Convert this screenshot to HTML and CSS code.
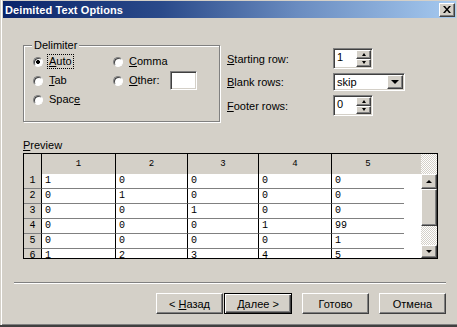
FILE: index.html
```html
<!DOCTYPE html>
<html>
<head>
<meta charset="utf-8">
<title>Delimited Text Options</title>
<link rel="stylesheet" href="styles.css">
</head>
<body>
<div class="window">
  <div class="titlebar">
    <span class="title">Deimited Text Options</span>
    <span class="close"><svg width="8" height="7" viewBox="0 0 8 7"><path d="M0 0h2l2 2.4L6 0h2L5 3.5 8 7H6L4 4.6 2 7H0l3-3.5z" fill="#000"/></svg></span>
  </div>

  <div class="top">
    <div class="group">
      <span class="legend">Delimiter</span>
      <div class="radios">
        <div class="radio"><span class="dot on"></span><span class="focus"><u>A</u>uto</span></div>
        <div class="radio"><span class="dot"></span><span><u>C</u>omma</span></div>
        <div class="radio"><span class="dot"></span><span><u>T</u>ab</span></div>
        <div class="radio"><span class="dot"></span><span><u>O</u>ther:</span><span class="textbox"></span></div>
        <div class="radio"><span class="dot"></span><span>Spac<u>e</u></span></div>
      </div>
    </div>

    <div class="fields">
      <div class="field">
        <span class="flabel"><u>S</u>tarting row:</span>
        <span class="spin"><span class="val">1</span><span class="spinbtns"><span class="sb"><span class="up"></span></span><span class="sb"><span class="down"></span></span></span></span>
      </div>
      <div class="field">
        <span class="flabel"><u>B</u>lank rows:</span>
        <span class="combo"><span class="val">skip</span><span class="dropbtn"><span class="down big"></span></span></span>
      </div>
      <div class="field">
        <span class="flabel"><u>F</u>ooter rows:</span>
        <span class="spin"><span class="val">0</span><span class="spinbtns"><span class="sb"><span class="up"></span></span><span class="sb"><span class="down"></span></span></span></span>
      </div>
    </div>
  </div>

  <div class="preview-label"><u>P</u>review</div>

  <div class="table">
    <div class="sheet">
      <div class="row head"><span class="c rh"></span><span class="c w1">1</span><span class="c w2">2</span><span class="c w3">3</span><span class="c w4">4</span><span class="c w5">5</span><span class="c fill"></span></div>
      <div class="row"><span class="c rh">1</span><span class="c w1">1</span><span class="c w2">0</span><span class="c w3">0</span><span class="c w4">0</span><span class="c w5">0</span><span class="c fill"></span></div>
      <div class="row"><span class="c rh">2</span><span class="c w1">0</span><span class="c w2">1</span><span class="c w3">0</span><span class="c w4">0</span><span class="c w5">0</span><span class="c fill"></span></div>
      <div class="row"><span class="c rh">3</span><span class="c w1">0</span><span class="c w2">0</span><span class="c w3">1</span><span class="c w4">0</span><span class="c w5">0</span><span class="c fill"></span></div>
      <div class="row"><span class="c rh">4</span><span class="c w1">0</span><span class="c w2">0</span><span class="c w3">0</span><span class="c w4">1</span><span class="c w5">99</span><span class="c fill"></span></div>
      <div class="row"><span class="c rh">5</span><span class="c w1">0</span><span class="c w2">0</span><span class="c w3">0</span><span class="c w4">0</span><span class="c w5">1</span><span class="c fill"></span></div>
      <div class="row"><span class="c rh">6</span><span class="c w1">1</span><span class="c w2">2</span><span class="c w3">3</span><span class="c w4">4</span><span class="c w5">5</span><span class="c fill"></span></div>
    </div>
    <div class="vscroll">
      <div class="corner"></div>
      <div class="sbtn up-btn"><span class="up"></span></div>
      <div class="thumb"></div>
      <div class="track"></div>
      <div class="sbtn down-btn"><span class="down"></span></div>
    </div>
  </div>

  <div class="sep"></div>

  <div class="buttons">
    <span class="btn"><span>&lt; <u>Н</u>азад</span></span>
    <span class="btn default"><span><u>Д</u>алее &gt;</span></span>
    <span class="btn gap"><span>Готово</span></span>
    <span class="btn gap"><span>Отмена</span></span>
  </div>
</div>
</body>
</html>
```

FILE: styles.css
```css
html, body {
  margin: 0;
  padding: 0;
  background: #d4d0c8;
  overflow: hidden;
}

.window {
  width: 457px;
  height: 327px;
  box-sizing: border-box;
  padding: 1px 1px 0 3px;
  background: #d4d0c8;
  border-bottom: 2px solid #404040;
  box-shadow: inset 1px 0 0 #d4d0c8, inset 2px 0 0 #ffffff, inset 0 -1px 0 #808080;
  font-family: "Liberation Sans", Arial, sans-serif;
  font-size: 11px;
  color: #000;
  display: flex;
  flex-direction: column;
}

u { text-decoration: underline; text-underline-offset: 1px; }

/* title bar */
.titlebar {
  height: 17px;
  display: flex;
  align-items: center;
  justify-content: space-between;
  padding: 0 1px 0 2px;
  background: linear-gradient(to right, #0a246a 0%, #2a4a8a 35%, #6a8cc0 65%, #a6caf0 100%);
}
.title {
  color: #fff;
  font-weight: bold;
  font-size: 11px;
  letter-spacing: 0.1px;
}
.close {
  width: 16px;
  height: 14px;
  box-sizing: border-box;
  background: #d4d0c8;
  border: 1px solid;
  border-color: #fff #404040 #404040 #fff;
  box-shadow: inset -1px -1px 0 #808080;
  display: flex;
  align-items: center;
  justify-content: center;
}

/* top section */
.top {
  display: flex;
  margin-top: 27px;
  margin-left: 20px;
}
.group {
  position: relative;
  width: 197px;
  height: 77px;
  box-sizing: border-box;
  border: 1px solid #808080;
  box-shadow: 1px 1px 0 #fff, inset 1px 1px 0 #fff;
}
.legend {
  position: absolute;
  top: -7px;
  left: 8px;
  padding: 0 2px;
  line-height: 13px;
  background: #d4d0c8;
}
.radios {
  display: grid;
  grid-template-columns: 80px 1fr;
  grid-auto-rows: 13px;
  row-gap: 6px;
  padding: 9px 0 0 9px;
}
.radio {
  display: flex;
  align-items: center;
  gap: 6px;
  line-height: 13px;
}
.dot {
  width: 10px;
  height: 10px;
  box-sizing: border-box;
  border-radius: 50%;
  background: #fff;
  border: 1px solid;
  border-color: #808080 #ffffff #ffffff #808080;
  box-shadow: inset 1px 1px 0 #404040;
  flex: none;
}
.dot.on {
  background: radial-gradient(circle, #000 0 1.8px, #fff 2.2px);
}
.focus {
  outline: 1px dotted #000;
  padding: 0 1px;
  margin-left: -1px;
}
.textbox {
  width: 27px;
  height: 19px;
  box-sizing: border-box;
  margin-left: 4px;
  background: #fff;
  border: 1px solid;
  border-color: #808080 #fff #fff #808080;
  box-shadow: inset 1px 1px 0 #404040, inset -1px -1px 0 #d4d0c8;
  flex: none;
}

.fields {
  display: flex;
  flex-direction: column;
  gap: 4px;
  margin: 3px 0 0 7px;
}
.field {
  display: flex;
  align-items: center;
}
.flabel {
  width: 106px;
}
.spin, .combo {
  display: flex;
  box-sizing: border-box;
  background: #fff;
  border: 1px solid;
  border-color: #808080 #fff #fff #808080;
  box-shadow: inset 1px 1px 0 #404040, inset -1px -1px 0 #d4d0c8;
  padding: 1px;
}
.spin { width: 40px; height: 21px; }
.combo { width: 72px; height: 18px; }
.val {
  flex: 1;
  padding-left: 2px;
  line-height: 15px;
  font-size: 11px;
}
.combo .val { line-height: 14px; }
.spinbtns {
  width: 15px;
  display: flex;
  flex-direction: column;
}
.sb, .dropbtn, .sbtn {
  box-sizing: border-box;
  background: #d4d0c8;
  border: 1px solid;
  border-color: #fff #404040 #404040 #fff;
  box-shadow: inset -1px -1px 0 #808080;
  display: flex;
  align-items: center;
  justify-content: center;
}
.sb { flex: 1; }
.dropbtn { width: 16px; }
.up, .down {
  width: 0;
  height: 0;
  border-left: 2.5px solid transparent;
  border-right: 2.5px solid transparent;
}
.up { border-bottom: 3px solid #000; }
.down { border-top: 3px solid #000; }
.down.big {
  border-left-width: 4px;
  border-right-width: 4px;
  border-top-width: 4px;
}

/* preview */
.preview-label {
  margin: 17px 0 0 20px;
  line-height: 13px;
}
.table {
  display: flex;
  width: 415px;
  height: 106px;
  box-sizing: border-box;
  margin: 1px 0 0 20px;
  border: 1px solid #000;
  overflow: hidden;
  font-family: "Liberation Mono", "Courier New", monospace;
  font-size: 10px;
}
.sheet {
  width: 397px;
  display: flex;
  flex-direction: column;
}
.row {
  display: flex;
  height: 15px;
  flex: none;
}
.row.head { height: 20px; }
.c {
  box-sizing: border-box;
  height: 100%;
  background: #fff;
  border-right: 1px solid #000;
  border-bottom: 1px solid #808080;
  padding-left: 3px;
  line-height: 14px;
  flex: none;
}
.row.head .c {
  background: #d4d0c8;
  border-bottom: none;
  text-align: center;
  padding: 0;
  line-height: 20px;
  font-size: 9px;
}
.c.rh {
  width: 18px;
  background: #d4d0c8;
  text-align: center;
  padding: 0;
}
.w1 { width: 74px; }
.w2 { width: 72px; }
.w3 { width: 71px; }
.w4 { width: 73px; }
.w5 { width: 72px; border-right: none !important; }
.c.fill {
  width: 17px;
  border-right: none;
  border-bottom: none;
}

.vscroll {
  width: 16px;
  display: flex;
  flex-direction: column;
}
.corner, .track {
  background-color: #fff;
  background-image: repeating-conic-gradient(#d4d0c8 0 25%, #ffffff 0 50%);
  background-size: 2px 2px;
}
.corner { height: 20px; }
.up-btn { height: 15px; }
.thumb {
  height: 37px;
  box-sizing: border-box;
  background: #d4d0c8;
  border: 1px solid;
  border-color: #fff #404040 #404040 #fff;
  box-shadow: inset -1px -1px 0 #808080;
}
.track { flex: 1; }
.down-btn { height: 13px; }
.sbtn .up, .sbtn .down {
  border-left-width: 3.5px;
  border-right-width: 3.5px;
}

/* separator */
.sep {
  margin: 23px 0 0 11px;
  width: 432px;
  border-top: 1px solid #808080;
  border-bottom: 1px solid #fff;
}

/* buttons */
.buttons {
  display: flex;
  justify-content: flex-end;
  gap: 1px;
  margin-top: 9px;
  padding-right: 10px;
}
.btn {
  width: 67px;
  height: 21px;
  box-sizing: border-box;
  background: #d4d0c8;
  border: 1px solid;
  border-color: #fff #404040 #404040 #fff;
  box-shadow: inset -1px -1px 0 #808080;
  display: flex;
  align-items: center;
  justify-content: center;
  white-space: pre;
}
.btn.default {
  width: 68px;
  border-color: #000;
  box-shadow: inset 1px 1px 0 #fff, inset -1px -1px 0 #404040, inset -2px -2px 0 #808080;
}
.btn.gap { margin-left: 9px; }
```
